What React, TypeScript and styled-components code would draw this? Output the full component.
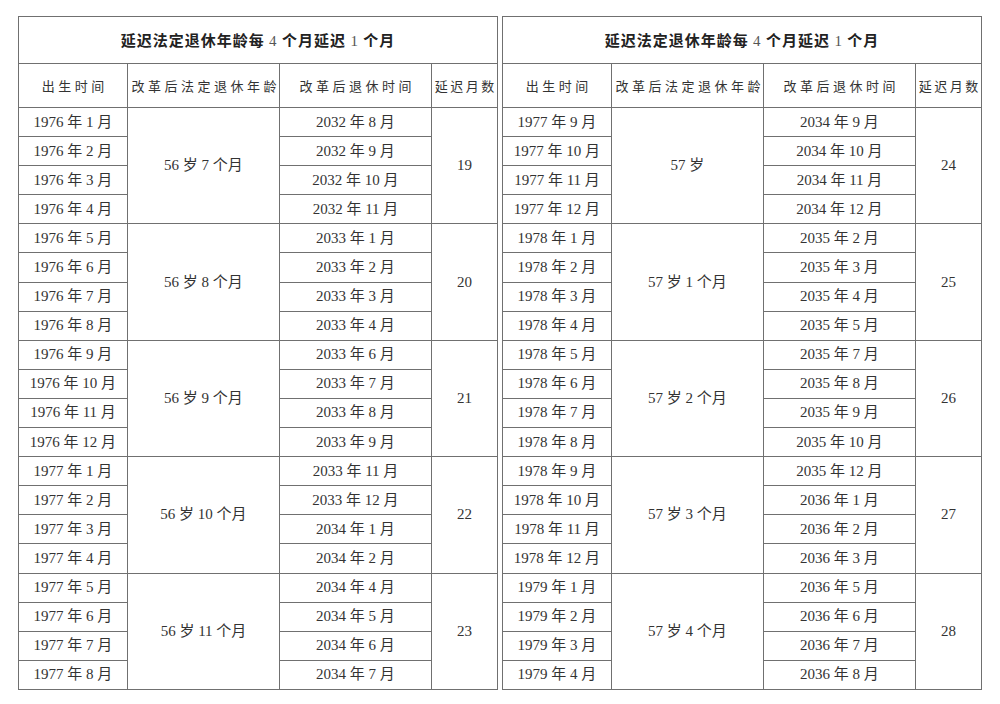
import React from 'react'
import styled, {createGlobalStyle} from 'styled-components'

const GlobalStyle = createGlobalStyle`
  html, body {
    margin: 0;
    padding: 0;
    background: #ffffff;
  }
`

type Group = {
    delay: number
    ageYears: number
    ageMonths: number
    startYear: number
    startMonth: number
}

const leftGroups: Group[] = [
    {delay: 19, ageYears: 56, ageMonths: 7, startYear: 1976, startMonth: 1},
    {delay: 20, ageYears: 56, ageMonths: 8, startYear: 1976, startMonth: 5},
    {delay: 21, ageYears: 56, ageMonths: 9, startYear: 1976, startMonth: 9},
    {delay: 22, ageYears: 56, ageMonths: 10, startYear: 1977, startMonth: 1},
    {delay: 23, ageYears: 56, ageMonths: 11, startYear: 1977, startMonth: 5},
]

const rightGroups: Group[] = [
    {delay: 24, ageYears: 57, ageMonths: 0, startYear: 1977, startMonth: 9},
    {delay: 25, ageYears: 57, ageMonths: 1, startYear: 1978, startMonth: 1},
    {delay: 26, ageYears: 57, ageMonths: 2, startYear: 1978, startMonth: 5},
    {delay: 27, ageYears: 57, ageMonths: 3, startYear: 1978, startMonth: 9},
    {delay: 28, ageYears: 57, ageMonths: 4, startYear: 1979, startMonth: 1},
]

const ym = (index: number) => {
    // index counted in months from year 0
    const y = Math.floor(index / 12)
    const m = (index % 12) + 1
    return `${y} 年 ${m} 月`
}

const ageText = (g: Group) =>
    g.ageMonths === 0 ? `${g.ageYears} 岁` : `${g.ageYears} 岁 ${g.ageMonths} 个月`

const RetireTable = ({groups}: {groups: Group[]}) => {
    return (
        <Table>
            <colgroup>
                <col style={{width: 109}}/>
                <col style={{width: 152}}/>
                <col style={{width: 152}}/>
                <col style={{width: 66}}/>
            </colgroup>
            <tbody>
            <TitleRow>
                <TitleCell colSpan={4}>
                    延迟法定退休年龄每 <Num>4</Num> 个月延迟 <Num>1</Num> 个月
                </TitleCell>
            </TitleRow>
            <HeadRow>
                <HeadCell>出生时间</HeadCell>
                <HeadCell>改革后法定退休年龄</HeadCell>
                <HeadCell>改革后退休时间</HeadCell>
                <HeadCell $tight>延迟月数</HeadCell>
            </HeadRow>
            {groups.map(g => {
                const birth = g.startYear * 12 + g.startMonth - 1
                const age = g.ageYears * 12 + g.ageMonths
                return [0, 1, 2, 3].map(i => (
                    <DataRow key={`${g.delay}-${i}`}>
                        <Cell>{ym(birth + i)}</Cell>
                        {i === 0 && <Cell rowSpan={4}>{ageText(g)}</Cell>}
                        <Cell>{ym(birth + i + age)}</Cell>
                        {i === 0 && <Cell rowSpan={4}>{g.delay}</Cell>}
                    </DataRow>
                ))
            })}
            </tbody>
        </Table>
    )
}

const App = () => {
    return (
        <>
            <GlobalStyle/>
            <Page>
                <RetireTable groups={leftGroups}/>
                <RetireTable groups={rightGroups}/>
            </Page>
        </>
    )
}

const Page = styled.div`
  display: flex;
  align-items: flex-start;
  gap: 4px;
  padding: 16px 0 0 18px;
  width: 1000px;
  height: 704px;
  box-sizing: border-box;
`

const Table = styled.table`
  border-collapse: collapse;
  table-layout: fixed;
  width: 480px;
  border: 1.5px solid #3a3a3a;
  color: #333333;
  font-family: "Liberation Serif", "Noto Sans CJK SC", serif;
  font-size: 15px;
`

const TitleRow = styled.tr`
  height: 47px;
`

const HeadRow = styled.tr`
  height: 44px;
`

const DataRow = styled.tr`
  height: 29.1px;
`

const Cell = styled.td`
  border: 1px solid #707070;
  padding: 0;
  text-align: center;
  vertical-align: middle;
  white-space: nowrap;
  line-height: 1;
`

const TitleCell = styled(Cell)`
  font-family: "Noto Sans CJK SC", sans-serif;
  font-weight: 700;
  font-size: 15px;
  letter-spacing: 1px;
  color: #222222;
`

const Num = styled.span`
  font-family: "Liberation Serif", serif;
  font-weight: 400;
  color: #555555;
`

const HeadCell = styled(Cell)<{$tight?: boolean}>`
  font-family: "Noto Sans CJK SC", sans-serif;
  font-weight: 400;
  font-size: 13px;
  letter-spacing: ${p => (p.$tight ? '2.5px' : '3.5px')};
  padding-left: ${p => (p.$tight ? '2.5px' : '3.5px')};
  color: #333333;
`

export default App
